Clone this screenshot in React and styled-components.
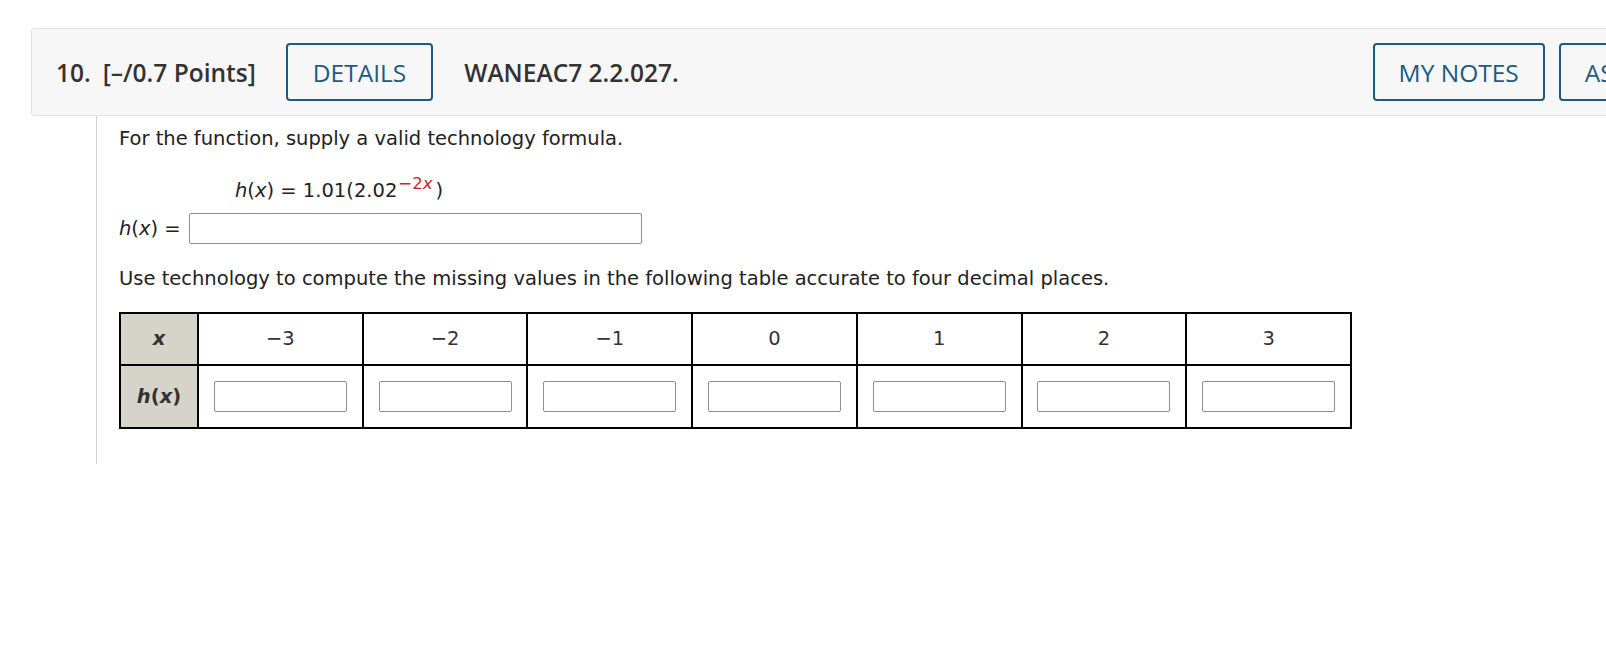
import React from "react";
import styled, { createGlobalStyle } from "styled-components";

const GlobalStyle = createGlobalStyle`
  html, body {
    margin: 0;
    padding: 0;
    background: #ffffff;
    overflow: hidden;
  }
  body {
    font-family: "DejaVu Sans", Verdana, sans-serif;
    color: #222;
  }
`;

const Page = styled.div`
  padding: 28px 0 0 31px;
  width: 1950px;
`;

const QuestionHeader = styled.div`
  display: flex;
  align-items: center;
  box-sizing: border-box;
  width: 1832px;
  height: 88px;
  padding: 0 24px;
  background: #f7f7f7;
  border: 1px solid #e2e2e2;
  border-radius: 3px;
  font-family: "Open Sans", "Liberation Sans", sans-serif;
`;

const HeaderLabel = styled.span`
  font-size: 24.5px;
  font-weight: 600;
  color: #333333;
  margin-right: ${(p) => p.$gap || 0}px;
  white-space: nowrap;
`;

const OutlineButton = styled.button`
  box-sizing: border-box;
  height: 58px;
  padding: 0 ${(p) => p.$pad || 25}px;
  background: transparent;
  border: 2px solid #1d5b83;
  border-radius: 4px;
  color: #1d5b83;
  font-family: "Open Sans", "Liberation Sans", sans-serif;
  font-size: 24.5px;
  font-weight: 500;
  white-space: nowrap;
  margin-right: ${(p) => p.$gap || 0}px;
`;

const RightGroup = styled.div`
  display: flex;
  align-items: center;
  gap: 14px;
  margin-left: auto;
`;

const Content = styled.div`
  margin-left: 65px;
  border-left: 1px solid #cfcfcf;
  padding: 12px 0 35px 22px;
  width: 1300px;
  font-size: 19.5px;
  line-height: 22px;
  color: #222;
`;

const Paragraph = styled.div`
  margin-top: ${(p) => p.$top || 0}px;
  white-space: nowrap;
`;

const Formula = styled.div`
  margin-top: 30px;
  padding-left: 116px;
  height: 22px;
`;

const Var = styled.i`
  font-style: italic;
`;

const Sup = styled.sup`
  color: #c1272d;
  font-size: 16.5px;
  vertical-align: 8px;
  line-height: 0;
  margin: 0 3px 0 1px;
`;

const AnswerRow = styled.div`
  display: flex;
  align-items: center;
  margin-top: 11px;
`;

const AnswerLabel = styled.span`
  margin-right: 8px;
`;

const TextBox = styled.input`
  box-sizing: border-box;
  width: ${(p) => p.$w}px;
  height: 31px;
  border: 1px solid #8e8e8e;
  border-radius: 2px;
  background: #fff;
  margin: 0;
  padding: 0 4px;
  font-family: inherit;
`;

const ValueTable = styled.div`
  display: grid;
  grid-template-columns: 78px repeat(7, 1fr);
  grid-template-rows: 52px 63px;
  box-sizing: border-box;
  width: 1233px;
  margin-top: 22px;
  border-left: 2px solid #000;
  border-top: 2px solid #000;
`;

const Cell = styled.div`
  box-sizing: border-box;
  display: flex;
  align-items: center;
  justify-content: center;
  border-right: 2px solid #000;
  border-bottom: 2px solid #000;
  background: ${(p) => (p.$head ? "#d6d3ca" : "#ffffff")};
  color: #333;
  font-weight: ${(p) => (p.$head ? 700 : 400)};
  font-size: 19.5px;
`;

const xs = ["\u22123", "\u22122", "\u22121", "0", "1", "2", "3"];

export default function App() {
  return (
    <>
      <GlobalStyle />
      <Page>
        <QuestionHeader>
          <HeaderLabel $gap={12}>10.</HeaderLabel>
          <HeaderLabel $gap={30}>[–/0.7 Points]</HeaderLabel>
          <OutlineButton $gap={31}>DETAILS</OutlineButton>
          <HeaderLabel>WANEAC7 2.2.027.</HeaderLabel>
          <RightGroup>
            <OutlineButton $pad={24}>MY NOTES</OutlineButton>
            <OutlineButton $pad={24}>ASK YOUR TEACHER</OutlineButton>
          </RightGroup>
        </QuestionHeader>
        <Content>
          <Paragraph>For the function, supply a valid technology formula.</Paragraph>
          <Formula>
            <Var>h</Var>(<Var>x</Var>) = 1.01(2.02<Sup>−2<Var>x</Var></Sup>)
          </Formula>
          <AnswerRow>
            <AnswerLabel>
              <Var>h</Var>(<Var>x</Var>) =
            </AnswerLabel>
            <TextBox $w={453} />
          </AnswerRow>
          <Paragraph $top={24}>
            Use technology to compute the missing values in the following table accurate to four decimal places.
          </Paragraph>
          <ValueTable>
            <Cell $head>
              <Var>x</Var>
            </Cell>
            {xs.map((v) => (
              <Cell key={v}>{v}</Cell>
            ))}
            <Cell $head>
              <span>
                <Var>h</Var>(<Var>x</Var>)
              </span>
            </Cell>
            {xs.map((v) => (
              <Cell key={"i" + v}>
                <TextBox $w={133} />
              </Cell>
            ))}
          </ValueTable>
        </Content>
      </Page>
    </>
  );
}
